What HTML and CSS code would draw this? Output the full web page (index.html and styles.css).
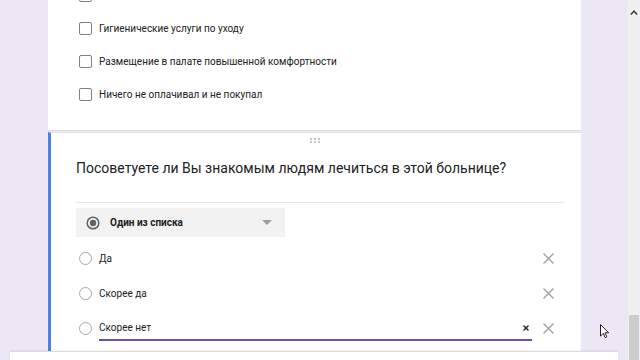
FILE: index.html
```html
<!DOCTYPE html>
<html lang="ru">
<head>
<meta charset="utf-8">
<link rel="stylesheet" href="styles.css">
</head>
<body>
<div class="page">
  <div class="content">
    <div class="column">
      <section class="card card-top">
        <div class="check-row"><span class="checkbox"></span><span class="label"></span></div>
        <div class="check-row"><span class="checkbox"></span><span class="label">Гигиенические услуги по уходу</span></div>
        <div class="check-row"><span class="checkbox"></span><span class="label">Размещение в палате повышенной комфортности</span></div>
        <div class="check-row"><span class="checkbox"></span><span class="label">Ничего не оплачивал и не покупал</span></div>
      </section>
      <section class="card card-active">
        <div class="drag">
          <svg width="10" height="5" viewBox="0 0 10 5"><g fill="#c4c4c4"><rect x="0" y="0" width="2" height="2"/><rect x="4" y="0" width="2" height="2"/><rect x="8" y="0" width="2" height="2"/><rect x="0" y="3" width="2" height="2"/><rect x="4" y="3" width="2" height="2"/><rect x="8" y="3" width="2" height="2"/></g></svg>
        </div>
        <div class="question">Посоветуете ли Вы знакомым людям лечиться в этой больнице?</div>
        <div class="divider"></div>
        <div class="type-select">
          <svg class="type-icon" width="14" height="14" viewBox="0 0 14 14"><circle cx="7" cy="7" r="5.8" fill="none" stroke="#5f6368" stroke-width="1.5"/><circle cx="7" cy="7" r="3.2" fill="#5f6368"/></svg>
          <span class="type-label">Один из списка</span>
          <svg class="type-arrow" width="10" height="5" viewBox="0 0 10 5"><path d="M0 0h10L5 5z" fill="#9e9e9e"/></svg>
        </div>
        <div class="options">
          <div class="option"><span class="radio"></span><span class="opt-text">Да</span><svg class="remove" width="11" height="11" viewBox="0 0 11 11"><path d="M0.5 0.5l10 10M10.5 0.5l-10 10" stroke="#9e9e9e" stroke-width="1.3"/></svg></div>
          <div class="option"><span class="radio"></span><span class="opt-text">Скорее да</span><svg class="remove" width="11" height="11" viewBox="0 0 11 11"><path d="M0.5 0.5l10 10M10.5 0.5l-10 10" stroke="#9e9e9e" stroke-width="1.3"/></svg></div>
          <div class="option editing"><span class="radio"></span><span class="opt-field"><span class="opt-text">Скорее нет</span><svg class="clear" width="6" height="6" viewBox="0 0 6 6"><path d="M0.5 0.5l5 5M5.5 0.5l-5 5" stroke="#202124" stroke-width="1.4"/></svg></span><svg class="remove" width="11" height="11" viewBox="0 0 11 11"><path d="M0.5 0.5l10 10M10.5 0.5l-10 10" stroke="#9e9e9e" stroke-width="1.3"/></svg></div>
        </div>
      </section>
    </div>
  </div>
  <div class="scrollbar">
    <svg class="scroll-up" width="8" height="5" viewBox="0 0 8 5"><path d="M0.8 4.5L4 1.2l3.2 3.3" fill="none" stroke="#444" stroke-width="1.6"/></svg>
    <div class="scroll-thumb"></div>
  </div>
</div>
<div class="bottom-panel"></div>
<svg class="cursor" width="9" height="14" viewBox="0 0 9 14"><path d="M0.5 0.5v11.5l2.8-2.6 1.9 4.2 1.6-0.7-1.9-4.1h3.8z" fill="#fff" stroke="#222" stroke-width="1" stroke-linejoin="round"/></svg>
</body>
</html>
```

FILE: styles.css
```css
* { box-sizing: border-box; }
html, body {
  margin: 0;
  padding: 0;
  width: 640px;
  height: 360px;
  overflow: hidden;
  background: #ebe7f5;
  font-family: Roboto, "Noto Sans", Arial, sans-serif;
  color: #202124;
}
.page {
  display: flex;
  height: 360px;
}
.content {
  flex: 1;
  padding-left: 48px;
  overflow: hidden;
}
.column {
  width: 533px;
  margin-top: -21px;
  display: flex;
  flex-direction: column;
  gap: 1px;
}
.card {
  background: #fff;
}
.card-top {
  padding: 0 0 19px 31px;
  border-bottom: 1px solid #dcdcdc;
}
.check-row {
  height: 33px;
  display: flex;
  align-items: center;
  gap: 7px;
}
.checkbox {
  width: 13px;
  height: 13px;
  border: 1.5px solid #808080;
  border-radius: 2px;
  flex: none;
}
.label {
  font-size: 10px;
  color: #202124;
}
.card-active {
  border-left: 3px solid #4a80e8;
  border-top: 1px solid #e2e2e2;
  padding: 0 17px 20px 25px;
  height: 260px;
}
.drag {
  height: 16px;
  display: flex;
  justify-content: center;
  padding-top: 5px;
  margin-left: -10px;
}
.drag svg { display: block; }
.question {
  font-size: 14px;
  line-height: 20px;
  margin-top: 9px;
  color: #202124;
}
.divider {
  height: 1px;
  background: #e6e6e6;
  margin-top: 24px;
}
.type-select {
  width: 209px;
  height: 29px;
  background: #f2f2f2;
  margin-top: 5px;
  display: flex;
  align-items: center;
  padding-left: 10px;
  padding-right: 13px;
}
.type-icon { flex: none; }
.type-label {
  font-size: 10px;
  font-weight: 700;
  margin-left: 10px;
  flex: 1;
}
.type-arrow { flex: none; }
.options {
  margin-top: 4px;
  display: flex;
  flex-direction: column;
}
.option {
  height: 35px;
  display: flex;
  align-items: center;
}
.radio {
  width: 13px;
  height: 13px;
  border: 1.5px solid #a8a8a8;
  border-radius: 50%;
  margin-left: 3px;
  flex: none;
}
.opt-text {
  font-size: 10px;
  margin-left: 7px;
  flex: 1;
}
.option .remove {
  flex: none;
  margin-right: 10px;
}
.opt-field {
  flex: 1;
  display: flex;
  align-items: center;
  height: 24px;
  margin-left: 7px;
  margin-right: 11px;
  border-bottom: 2px solid #6a4fb0;
  padding-right: 3px;
}
.opt-field .opt-text { margin-left: 0; }
.scrollbar {
  width: 12px;
  flex: none;
  background: #f0f0f0;
  display: flex;
  flex-direction: column;
  align-items: center;
}
.scroll-up {
  margin-top: 10px;
  flex: none;
}
.scroll-thumb {
  margin-top: auto;
  width: 10px;
  height: 45px;
  background: #cdcdcd;
}
.bottom-panel {
  position: absolute;
  left: 10px;
  top: 351px;
  width: 608px;
  height: 20px;
  background: #fff;
  border-top: 1px solid #dcdcdc;
  box-shadow: 0 -1px 2px rgba(0,0,0,0.06);
}
.cursor {
  position: absolute;
  left: 600px;
  top: 324px;
}
```
